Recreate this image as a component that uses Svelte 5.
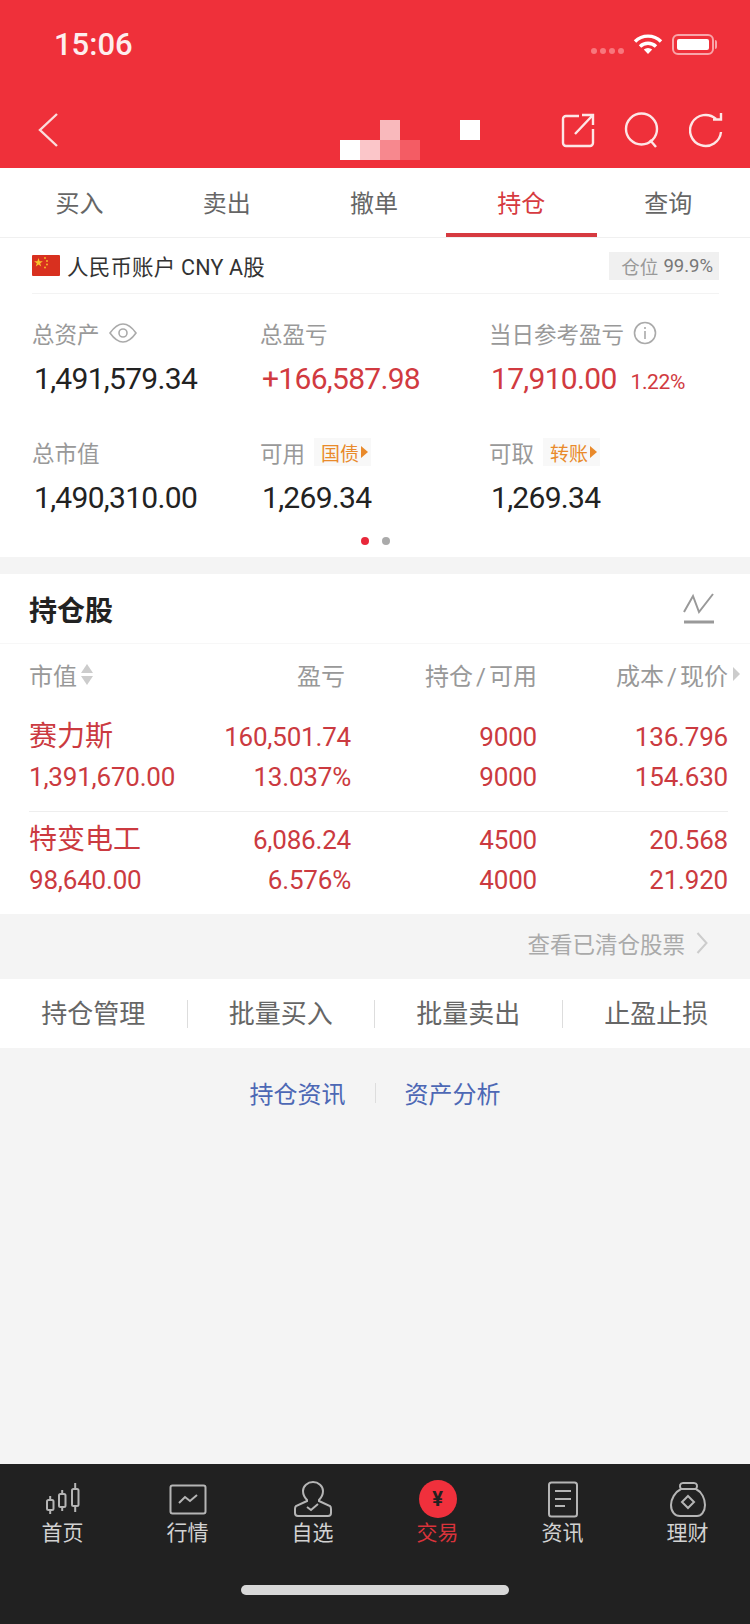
<script>
  const tabs = ['买入', '卖出', '撤单', '持仓', '查询'];
  const stocks = [
    { name: '赛力斯', value: '1,391,670.00', profit: '160,501.74', rate: '13.037%', hold: '9000', avail: '9000', cost: '136.796', price: '154.630' },
    { name: '特变电工', value: '98,640.00', profit: '6,086.24', rate: '6.576%', hold: '4500', avail: '4000', cost: '20.568', price: '21.920' }
  ];
  const actions = ['持仓管理', '批量买入', '批量卖出', '止盈止损'];
  const navItems = [
    { key: 'home', label: '首页' },
    { key: 'market', label: '行情' },
    { key: 'watch', label: '自选' },
    { key: 'trade', label: '交易' },
    { key: 'news', label: '资讯' },
    { key: 'money', label: '理财' }
  ];
</script>

<div class="page">
  <header class="top">
    <div class="status">
      <span class="time">15:06</span>
      <div class="status-right">
        <span class="signal"><i></i><i></i><i></i><i></i></span>
        <svg class="wifi" width="30" height="22" viewBox="0 0 30 22" fill="none" stroke="#fff" stroke-width="3.4">
          <path d="M2 8.5a18.5 18.5 0 0 1 26 0" />
          <path d="M7 13.5a11.5 11.5 0 0 1 16 0" />
          <path d="M15 21l-4.2-4.4a6 6 0 0 1 8.4 0z" fill="#fff" stroke="none" />
        </svg>
        <span class="battery"><span></span></span>
      </div>
    </div>
    <div class="nav">
      <svg class="back" width="22" height="36" viewBox="0 0 22 36" fill="none" stroke="#fbdcdc" stroke-width="2.4">
        <path d="M20 2L3 18l17 16" />
      </svg>
      <div class="mosaic">
        <div class="mosaic-row"><i class="gap"></i><i class="gap"></i><i class="p2"></i><i class="gap"></i><i class="gap"></i><i class="gap"></i><i class="w"></i></div>
        <div class="mosaic-row"><i class="w"></i><i class="p1"></i><i class="p3"></i><i class="p4"></i></div>
      </div>
      <div class="nav-icons">
        <svg width="34" height="36" viewBox="0 0 34 36" fill="none" stroke="#fde6e6" stroke-width="2.4">
          <path d="M18 4H5a3 3 0 0 0-3 3v24a3 3 0 0 0 3 3h24a3 3 0 0 0 3-3V17" />
          <path d="M14 22L31 4M21 3h11v10" />
        </svg>
        <svg width="36" height="36" viewBox="0 0 36 36" fill="none" stroke="#fde6e6" stroke-width="2.4">
          <circle cx="17.5" cy="17" r="15.5" />
          <path d="M26 28l6 7" />
        </svg>
        <svg width="34" height="36" viewBox="0 0 34 36" fill="none" stroke="#fde6e6" stroke-width="2.4">
          <path d="M27 7A15.5 15.5 0 1 0 32 20" />
          <path d="M24 7.500h8V1" stroke-width="2.4" />
        </svg>
      </div>
    </div>
  </header>

  <nav class="tabs">
    {#each tabs as tab, i}
      <div class="tab" class:active={i === 3}>{tab}</div>
    {/each}
  </nav>

  <section class="account">
    <div class="account-head">
      <svg width="28" height="21" viewBox="0 0 28 21">
        <rect width="28" height="21" rx="1" fill="#d8301f" />
        <path d="M6.500 3l1.100 3.200h3.300l-2.700 2 1 3.200-2.700-2-2.700 2 1-3.200-2.700-2h3.300z" fill="#f8c32c" />
        <circle cx="13" cy="3" r="0.9" fill="#f8c32c" />
        <circle cx="15" cy="6" r="0.9" fill="#f8c32c" />
        <circle cx="15" cy="9.500" r="0.9" fill="#f8c32c" />
        <circle cx="13" cy="12.500" r="0.9" fill="#f8c32c" />
      </svg>
      <span class="account-name">人民币账户 CNY A股</span>
      <span class="ratio">仓位 <b>99.9%</b></span>
    </div>

    <div class="stats">
      <div class="stat">
        <div class="stat-label">总资产
          <svg width="28" height="22" viewBox="0 0 28 22" fill="none" stroke="#aaa" stroke-width="1.600">
            <path d="M1 11C6 4 10 2 14 2s8 2 13 9c-5 7-9 9-13 9S6 18 1 11z" />
            <circle cx="14" cy="11" r="4" />
          </svg>
        </div>
        <div class="stat-value">1,491,579.34</div>
      </div>
      <div class="stat">
        <div class="stat-label">总盈亏</div>
        <div class="stat-value red">+166,587.98</div>
      </div>
      <div class="stat">
        <div class="stat-label">当日参考盈亏
          <svg width="24" height="24" viewBox="0 0 24 24" fill="none" stroke="#aaa" stroke-width="1.600">
            <circle cx="12" cy="12" r="10.500" />
            <path d="M12 10v8M12 6v2" />
          </svg>
        </div>
        <div class="stat-value red">17,910.00<small>1.22%</small></div>
      </div>
      <div class="stat">
        <div class="stat-label">总市值</div>
        <div class="stat-value">1,490,310.00</div>
      </div>
      <div class="stat">
        <div class="stat-label">可用<span class="tag">国债<i></i></span></div>
        <div class="stat-value">1,269.34</div>
      </div>
      <div class="stat">
        <div class="stat-label">可取<span class="tag">转账<i></i></span></div>
        <div class="stat-value">1,269.34</div>
      </div>
    </div>

    <div class="dots"><i class="on"></i><i></i></div>
  </section>

  <section class="holdings">
    <div class="holdings-title">
      <h2>持仓股</h2>
      <svg width="32" height="31" viewBox="0 0 32 31" fill="none" stroke="#999" stroke-width="2">
        <path d="M1 19L10 3l6 16L30 1" />
        <path d="M1 29h30" stroke-width="3" />
      </svg>
    </div>
    <div class="table-head">
      <span class="sort">市值<span class="sort-arrows"><i></i><i></i></span></span>
      <span class="head-profit">盈亏</span>
      <span>持仓<em>/</em>可用</span>
      <span class="head-price">成本<em>/</em>现价</span>
    </div>
    {#each stocks as s, i}
      <div class="stock" class:first={i === 0}>
        <div class="name">{s.name}</div>
        <div>{s.profit}</div>
        <div>{s.hold}</div>
        <div>{s.cost}</div>
        <div class="left">{s.value}</div>
        <div>{s.rate}</div>
        <div>{s.avail}</div>
        <div>{s.price}</div>
      </div>
    {/each}
  </section>

  <div class="cleared">
    查看已清仓股票
    <svg width="12" height="22" viewBox="0 0 12 22" fill="none" stroke="#ccc" stroke-width="2">
      <path d="M1.500 1l9 10-9 10" />
    </svg>
  </div>

  <div class="actions">
    {#each actions as a}
      <div class="action">{a}</div>
    {/each}
  </div>

  <div class="links">
    <span>持仓资讯</span>
    <i></i>
    <span>资产分析</span>
  </div>

  <div class="spacer"></div>

  <footer class="bar">
    <div class="bar-items">
      {#each navItems as item}
        <div class="bar-item" class:current={item.key === 'trade'}>
          <div class="bar-icon">
            {#if item.key === 'home'}
              <svg width="36" height="34" viewBox="0 0 36 34" fill="none" stroke="#b5b5b5" stroke-width="2">
                <rect x="2" y="18" width="6.500" height="10" rx="1.500" />
                <path d="M5.200 14v4M5.200 28v4" />
                <rect x="14" y="12" width="6.500" height="13" rx="1.500" />
                <path d="M17.200 8v4M17.200 25v4" />
                <rect x="27" y="7" width="6.500" height="17" rx="1.500" />
                <path d="M30.200 1v6M30.200 24v6" />
              </svg>
            {:else if item.key === 'market'}
              <svg width="38" height="31" viewBox="0 0 38 31" fill="none" stroke="#b5b5b5" stroke-width="2">
                <rect x="1.500" y="1.500" width="35" height="28" rx="2" />
                <path d="M10 19l6-6 5 4 7-6" />
              </svg>
            {:else if item.key === 'watch'}
              <svg width="40" height="36" viewBox="0 0 40 36" fill="none" stroke="#b5b5b5" stroke-width="2">
                <path d="M14 19C11 16 10 13 10 10A10 9 0 0 1 30 10C30 13 29 16 26 19V20L37 25Q38 26 38 28V32Q38 35 35 35H5Q2 35 2 32V28Q2 26 3 25L14 20Z" />
                <path d="M14 26l4 3 7-6" />
              </svg>
            {:else if item.key === 'trade'}
              <span class="trade-icon">¥</span>
            {:else if item.key === 'news'}
              <svg width="32" height="37" viewBox="0 0 32 37" fill="none" stroke="#b5b5b5" stroke-width="2">
                <rect x="2" y="1.500" width="28" height="34" rx="2.500" />
                <path d="M8 10h16M8 18h16M8 25h10" />
              </svg>
            {:else}
              <svg width="36" height="36" viewBox="0 0 36 36" fill="none" stroke="#b5b5b5" stroke-width="2">
                <path d="M11 8C9 5 10 2 13 2H24C27 2 28 5 26 8" />
                <path d="M11 8H26C32 11 35 18 35 24C35 31 31 35 27 35H10C5 35 1 31 1 24C1 18 5 11 11 8Z" />
                <path d="M18 15l6 6-6 6-6-6z" />
              </svg>
            {/if}
          </div>
          <div class="bar-label">{item.label}</div>
        </div>
      {/each}
    </div>
    <div class="home-indicator"></div>
  </footer>
</div>

<style>
  :global(body) {
    margin: 0;
    background: #f4f4f4;
  }

  .page {
    display: flex;
    flex-direction: column;
    width: 750px;
    height: 1624px;
    overflow: hidden;
    background: #f4f4f4;
    font-family: Roboto, "Noto Sans CJK SC", sans-serif;
    color: #222;
  }

  /* top red area */
  .top {
    height: 168px;
    background: #ef303a;
    color: #fff;
  }

  .status {
    display: flex;
    justify-content: space-between;
    align-items: center;
    height: 88px;
    margin-bottom: 2px;
    padding: 0 36px 0 54px;
  }

  .time {
    font-size: 31px;
    font-weight: 500;
    color: #fdeeee;
  }

  .status-right {
    display: flex;
    align-items: center;
    gap: 9px;
  }

  .signal {
    display: flex;
    gap: 3px;
    padding-top: 14px;
  }

  .signal i {
    width: 6px;
    height: 6px;
    border-radius: 50%;
    background: #f8777d;
  }

  .battery {
    position: relative;
    display: block;
    width: 42px;
    height: 21px;
    box-sizing: border-box;
    padding: 3px;
    border: 2px solid #f9a5a9;
    border-radius: 6px;
  }

  .battery::after {
    content: '';
    position: absolute;
    right: -5px;
    top: 4px;
    width: 2px;
    height: 9px;
    border-radius: 0 2px 2px 0;
    background: #f9a5a9;
  }

  .battery span {
    display: block;
    height: 100%;
    border-radius: 2px;
    background: #fff;
  }

  .nav {
    display: flex;
    justify-content: space-between;
    align-items: flex-start;
    position: relative;
    height: 78px;
    padding: 22px 27px 0 37px;
  }

  .mosaic {
    position: absolute;
    left: 340px;
    top: 30px;
  }

  .mosaic-row {
    display: flex;
  }

  .mosaic-row i {
    display: block;
    width: 20px;
    height: 20px;
  }

  .mosaic-row .w { background: #fff; }
  .mosaic-row .p1 { background: #fbc6c9; }
  .mosaic-row .p2 { background: #f9b9bc; }
  .mosaic-row .p3 { background: #f7888e; }
  .mosaic-row .p4 { background: #f45c64; }

  .nav-icons {
    display: flex;
    gap: 29px;
  }

  /* tabs */
  .tabs {
    display: grid;
    grid-template-columns: repeat(5, 147.2px);
    height: 70px;
    padding-left: 6px;
    background: #fff;
    box-sizing: border-box;
    border-bottom: 1px solid #f0f0f0;
  }

  .tab {
    display: flex;
    justify-content: center;
    align-items: center;
    padding-bottom: 2px;
    font-size: 24px;
    color: #666;
  }

  .tab.active {
    margin: 0 -2px;
    color: #d63a40;
    box-shadow: inset 0 -4px 0 #d63a40;
  }

  /* account summary */
  .account {
    height: 319px;
    box-sizing: border-box;
    padding: 0 31px 0 32px;
    background: #fff;
  }

  .account-head {
    display: flex;
    align-items: center;
    gap: 7px;
    height: 55px;
    border-bottom: 1px solid #f3f3f3;
  }

  .account-name {
    flex: 1;
    font-size: 21.500px;
    letter-spacing: 0.2px;
    color: #333;
  }

  .ratio {
    display: flex;
    align-items: center;
    gap: 5px;
    height: 28px;
    padding: 0 6px 0 12px;
    background: #f0f0f0;
    font-size: 18.500px;
    color: #999;
  }

  .ratio b {
    font-weight: 400;
    color: #777;
  }

  .stats {
    display: grid;
    grid-template-columns: 228px 229px 1fr;
    row-gap: 34px;
    padding-top: 23px;
  }

  .stat-label {
    display: flex;
    align-items: center;
    gap: 9px;
    height: 32px;
    font-size: 22.500px;
    color: #999;
  }

  .stat-value {
    margin-top: 10px;
    padding-left: 2px;
    font-size: 30px;
    line-height: 40px;
    letter-spacing: -0.7px;
    color: #222;
    white-space: nowrap;
  }

  .stat-value.red {
    color: #d13a40;
  }

  .stat-value small {
    margin-left: 14px;
    font-size: 21px;
    letter-spacing: -0.4px;
  }

  .tag {
    display: inline-flex;
    align-items: center;
    height: 28px;
    padding: 0 3px 0 7px;
    background: #f8f8f8;
    font-size: 19px;
    color: #e98a2b;
  }

  .tag i {
    width: 0;
    height: 0;
    margin-left: 2px;
    border-left: 7px solid #e98a2b;
    border-top: 6px solid transparent;
    border-bottom: 6px solid transparent;
  }

  .dots {
    display: flex;
    justify-content: center;
    gap: 13px;
    padding-top: 19px;
  }

  .dots i {
    width: 8px;
    height: 8px;
    border-radius: 50%;
    background: #aaa;
  }

  .dots i.on {
    background: #e8283a;
  }

  /* holdings table */
  .holdings {
    height: 340px;
    margin-top: 17px;
    background: #fff;
  }

  .holdings-title {
    display: flex;
    justify-content: space-between;
    align-items: center;
    height: 69px;
    padding: 0 35px 0 29px;
    border-bottom: 1px solid #f7f7f7;
  }

  .holdings-title h2 {
    margin: 0;
    font-size: 28px;
    font-weight: 700;
    color: #222;
  }

  .table-head,
  .stock {
    display: grid;
    grid-template-columns: 172px 150px 186px 191px;
    margin-left: 29px;
    width: 699px;
    text-align: right;
  }

  .table-head {
    align-items: center;
    height: 60px;
    margin-bottom: 13px;
    font-size: 24px;
    color: #999;
  }

  .table-head em {
    margin: 0 3px;
    font-style: normal;
  }

  .sort {
    display: flex;
    align-items: center;
    gap: 4px;
  }

  .sort-arrows {
    display: flex;
    flex-direction: column;
    gap: 3px;
  }

  .sort-arrows i {
    width: 0;
    height: 0;
    border-left: 6px solid transparent;
    border-right: 6px solid transparent;
    border-bottom: 9px solid #ccc;
  }

  .sort-arrows i:last-child {
    border-bottom: 0;
    border-top: 9px solid #ccc;
  }

  .head-profit {
    padding-right: 6px;
  }

  .head-price {
    position: relative;
  }

  .head-price::after {
    content: '';
    position: absolute;
    right: -12px;
    top: 10px;
    border-left: 7px solid #ccc;
    border-top: 7px solid transparent;
    border-bottom: 7px solid transparent;
  }

  .stock {
    align-items: center;
    font-size: 26px;
    line-height: 40px;
    letter-spacing: -0.2px;
    color: #cb3a40;
  }

  .stock.first {
    padding-bottom: 14px;
    margin-bottom: 8px;
    border-bottom: 1px solid #eee;
  }

  .name {
    font-size: 28px;
    letter-spacing: 0;
    text-align: left;
  }

  .left {
    text-align: left;
  }

  .cleared {
    display: flex;
    justify-content: flex-end;
    align-items: center;
    gap: 11px;
    height: 65px;
    box-sizing: border-box;
    padding: 0 42px 7px 0;
    font-size: 22.500px;
    color: #aaa;
  }

  .actions {
    display: grid;
    grid-template-columns: repeat(4, 1fr);
    align-items: center;
    height: 69px;
    background: #fff;
  }

  .action {
    height: 28px;
    line-height: 28px;
    text-align: center;
    font-size: 26px;
    color: #666;
    border-right: 1px solid #ddd;
  }

  .action:last-child {
    border-right: 0;
  }

  .links {
    display: flex;
    justify-content: center;
    align-items: center;
    gap: 29px;
    height: 89px;
    font-size: 24px;
    color: #4d68b5;
  }

  .links i {
    width: 1px;
    height: 20px;
    background: #ddd;
  }

  .spacer {
    flex: 1;
  }

  /* bottom bar */
  .bar {
    height: 160px;
    box-sizing: border-box;
    padding-top: 16px;
    background: #212121;
  }

  .bar-items {
    display: grid;
    grid-template-columns: repeat(6, 125px);
  }

  .bar-item {
    display: flex;
    flex-direction: column;
    align-items: center;
    font-size: 21px;
    color: #d2d2d2;
  }

  .bar-item.current {
    color: #d9333b;
  }

  .bar-icon {
    display: flex;
    align-items: center;
    justify-content: center;
    height: 38px;
  }

  .trade-icon {
    display: flex;
    justify-content: center;
    align-items: center;
    width: 38px;
    height: 38px;
    border-radius: 50%;
    background: #f0303c;
    color: #212121;
    font-size: 20px;
    font-weight: 700;
  }

  .bar-label {
    line-height: 31px;
  }

  .home-indicator {
    width: 268px;
    height: 10px;
    margin: 36px auto 0;
    border-radius: 5px;
    background: #d8d8d8;
  }
</style>
